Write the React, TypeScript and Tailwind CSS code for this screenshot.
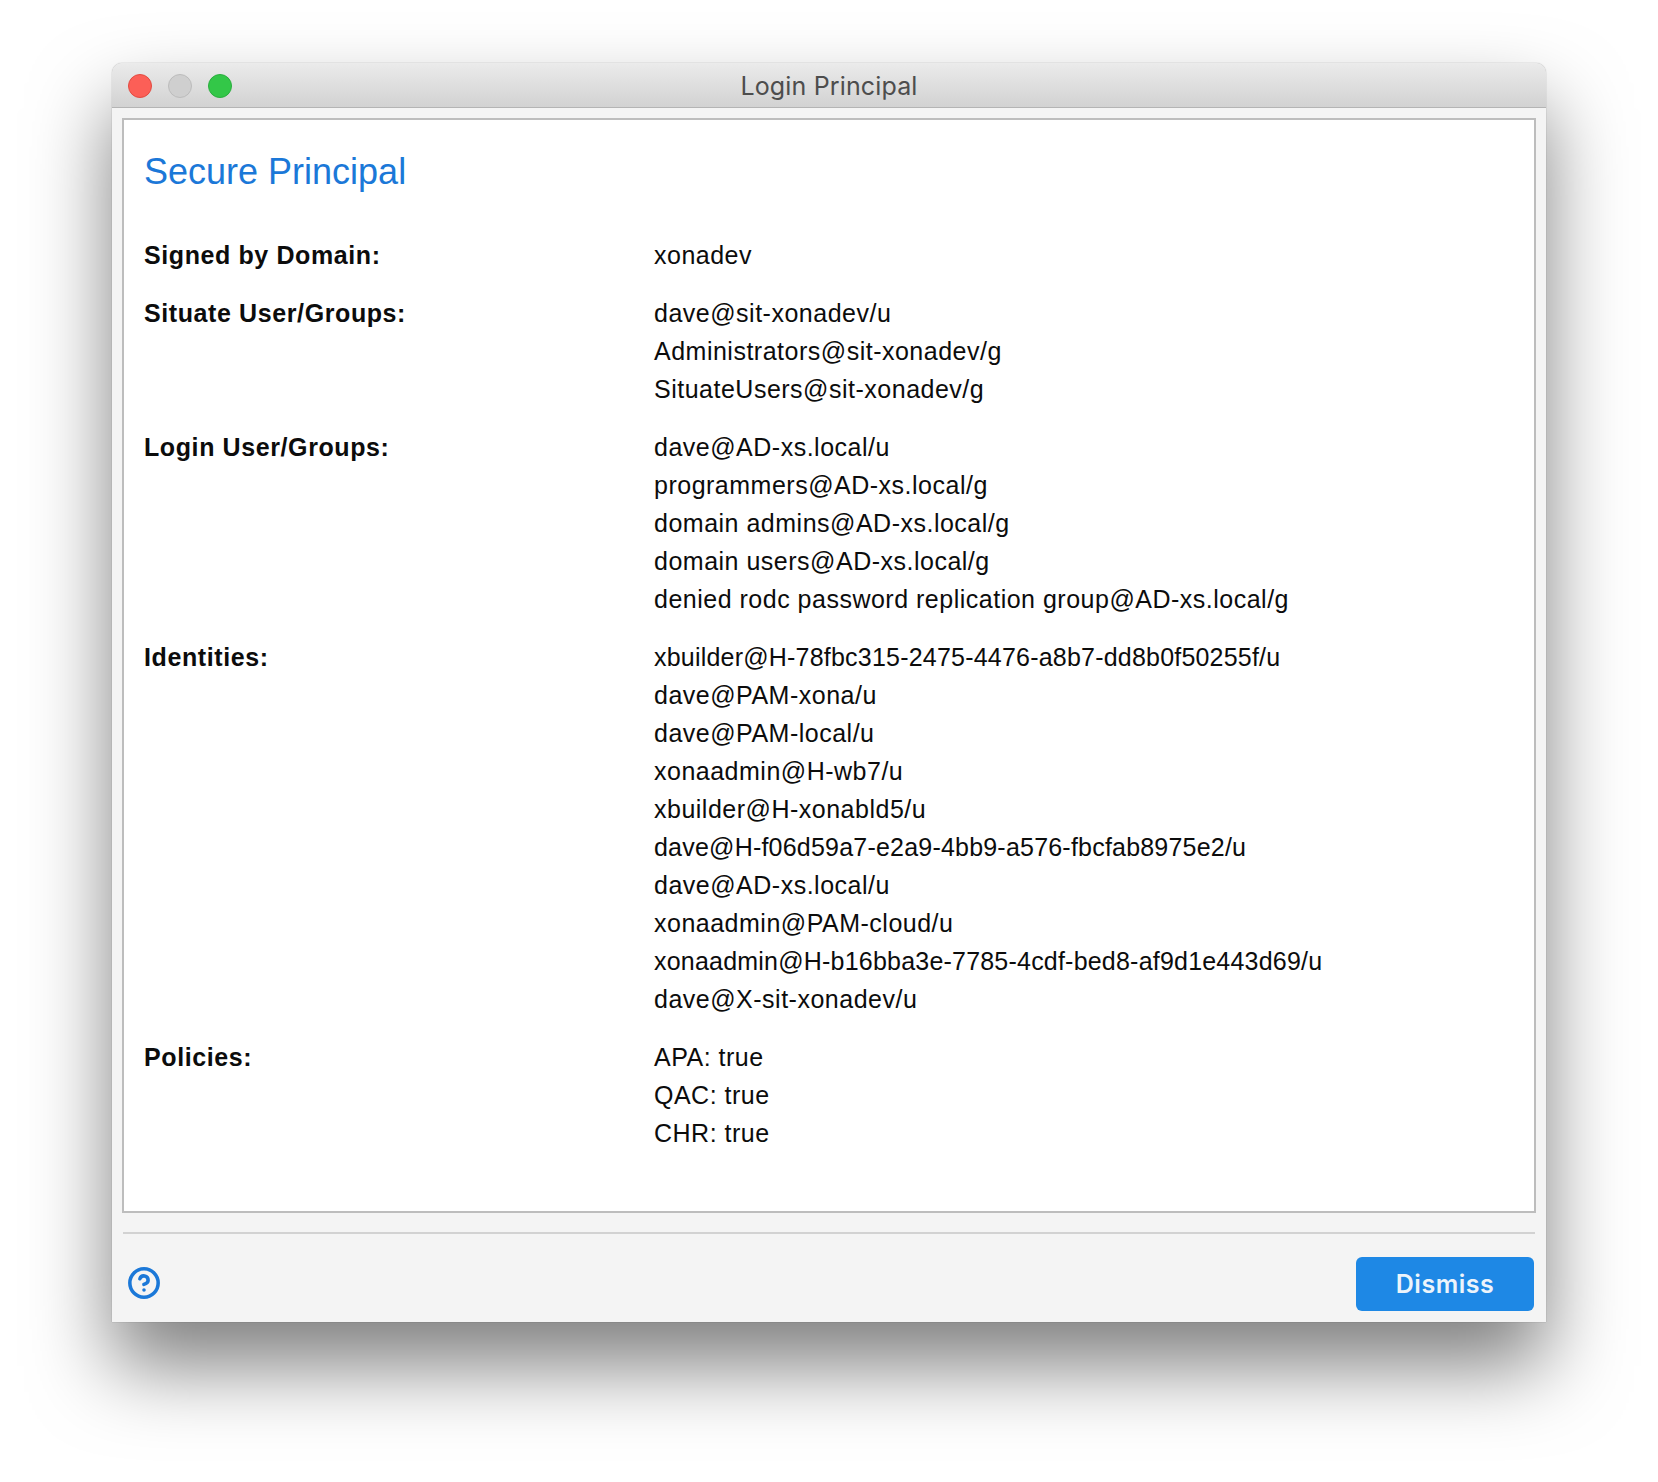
import { CircleHelp } from 'lucide-react';

const rows: { label: string; values: string[] }[] = [
  { label: 'Signed by Domain:', values: ['xonadev'] },
  { label: 'Situate User/Groups:', values: ['dave@sit-xonadev/u', 'Administrators@sit-xonadev/g', 'SituateUsers@sit-xonadev/g'] },
  {
    label: 'Login User/Groups:',
    values: [
      'dave@AD-xs.local/u',
      'programmers@AD-xs.local/g',
      'domain admins@AD-xs.local/g',
      'domain users@AD-xs.local/g',
      'denied rodc password replication group@AD-xs.local/g',
    ],
  },
  {
    label: 'Identities:',
    values: [
      'xbuilder@H-78fbc315-2475-4476-a8b7-dd8b0f50255f/u',
      'dave@PAM-xona/u',
      'dave@PAM-local/u',
      'xonaadmin@H-wb7/u',
      'xbuilder@H-xonabld5/u',
      'dave@H-f06d59a7-e2a9-4bb9-a576-fbcfab8975e2/u',
      'dave@AD-xs.local/u',
      'xonaadmin@PAM-cloud/u',
      'xonaadmin@H-b16bba3e-7785-4cdf-bed8-af9d1e443d69/u',
      'dave@X-sit-xonadev/u',
    ],
  },
  { label: 'Policies:', values: ['APA: true', 'QAC: true', 'CHR: true'] },
];

const isHostId = (v: string) => /-[0-9a-f]{4}-/.test(v);

export default function App() {
  return (
    <div className="h-[1482px] w-[1658px] overflow-hidden bg-white pt-[63px] pl-[112px] font-['Liberation_Sans',Arial,sans-serif]">
      <div className="flex h-[1259px] w-[1434px] flex-col rounded-t-[10px] bg-[#f4f4f4] shadow-[0_0_1px_rgba(0,0,0,0.5),0_44px_80px_rgba(0,0,0,0.5)]">
        {/* Title bar */}
        <div className="relative flex h-[45px] shrink-0 items-center justify-center rounded-t-[10px] border-b border-b-[#b4b4b4] bg-gradient-to-b from-[#ebebeb] to-[#d2d2d2]">
          <div className="absolute top-[11px] left-[16px] flex gap-[16px]">
            <span className="h-6 w-6 rounded-full border border-[#e24b41] bg-[#fc5f57]" />
            <span className="h-6 w-6 rounded-full border border-[#bcbcbc] bg-[#cfcfcf]" />
            <span className="h-6 w-6 rounded-full border border-[#2aae3e] bg-[#33c748]" />
          </div>
          <span className="pt-[3px] font-['Inter',sans-serif] text-[25px] leading-none tracking-[0.15px] text-[#4d4d4d]">Login Principal</span>
        </div>

        {/* Content panel */}
        <div className="mx-[10px] mt-[10px] h-[1095px] shrink-0 border-2 border-[#bdbdbd] bg-white pt-[31px] pl-[20px]">
          <h1 className="text-[36px] leading-[42px] text-[#1b78d8]">Secure Principal</h1>
          <div className="mt-[43px] flex flex-col gap-[20px] text-[25px] leading-[38px] text-[#0c0c0c]">
            {rows.map((row) => (
              <div key={row.label} className="flex">
                <div className="w-[510px] shrink-0 font-bold tracking-[0.6px]">{row.label}</div>
                <div>
                  {row.values.map((v) => (
                    <div key={v} className={isHostId(v) ? 'tracking-[0.21px]' : 'tracking-[0.5px]'}>
                      {v}
                    </div>
                  ))}
                </div>
              </div>
            ))}
          </div>
        </div>

        {/* Footer */}
        <div className="mx-[11px] mt-[19px] h-[2px] shrink-0 bg-[#d2d2d2]" />
        <div className="flex flex-1 items-start justify-between pt-[23px] pr-[12px] pl-[15px]">
          <CircleHelp size={34} strokeWidth={2.5} className="mt-[9px] text-[#1b78d8]" />
          <button className="h-[54px] w-[178px] rounded-[6px] bg-[#1e88e5] pt-[1px] font-['Inter',sans-serif] text-[25px] font-semibold tracking-[0.5px] text-[#ecf4fb]">
            Dismiss
          </button>
        </div>
      </div>
    </div>
  );
}
